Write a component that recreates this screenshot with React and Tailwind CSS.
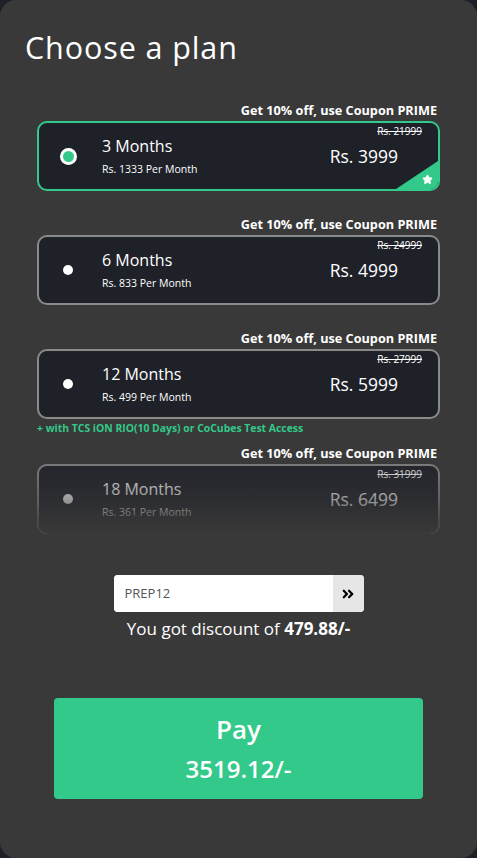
import { Star } from "lucide-react";
import { FaAngleDoubleRight } from "react-icons/fa";

const plans = [
  { id: 3, label: "3 Months", perMonth: "Rs. 1333 Per Month", mrp: "Rs. 21999", price: "Rs. 3999", selected: true },
  { id: 6, label: "6 Months", perMonth: "Rs. 833 Per Month", mrp: "Rs. 24999", price: "Rs. 4999" },
  {
    id: 12,
    label: "12 Months",
    perMonth: "Rs. 499 Per Month",
    mrp: "Rs. 27999",
    price: "Rs. 5999",
    extra: "+ with TCS iON RIO(10 Days) or CoCubes Test Access",
  },
  { id: 18, label: "18 Months", perMonth: "Rs. 361 Per Month", mrp: "Rs. 31999", price: "Rs. 6499", faded: true },
];

function PlanCard({ plan }) {
  return (
    <div className="flex flex-col">
      <p className="h-[17px] pr-[3px] text-right text-[12.7px] font-bold leading-[17px] text-white">
        Get 10% off, use Coupon PRIME
      </p>
      <div className="relative mt-[2px]">
        <div
          className={
            "relative flex h-[70px] items-center overflow-hidden rounded-[10px] border-2 bg-[#1f2129] " +
            (plan.selected ? "border-[#32c98a]" : "border-[#8a8a8a]")
          }
        >
          <div className="flex w-[58px] justify-center">
            {plan.selected ? (
              <span className="flex h-[17px] w-[17px] items-center justify-center rounded-full bg-white">
                <span className="h-[11px] w-[11px] rounded-full bg-[#32c98a]" />
              </span>
            ) : (
              <span className="h-[10px] w-[10px] rounded-full bg-white" />
            )}
          </div>
          <div className="flex flex-1 flex-col pl-[5px]">
            <span className="text-[16px] font-medium leading-[20px] text-white">{plan.label}</span>
            <span className="mt-[6px] text-[10.5px] font-medium leading-[14px] text-white">{plan.perMonth}</span>
          </div>
          <div className="flex flex-col items-end self-start pr-[16px] pt-[2px]">
            <span className="text-[10px] leading-[12px] text-white line-through">{plan.mrp}</span>
            <span className="mr-[24px] mt-[8px] text-[17.5px] font-medium leading-[22px] text-white">{plan.price}</span>
          </div>
          {plan.selected ? (
            <div className="absolute bottom-0 right-0 h-[28px] w-[42px] bg-[#32c98a] [clip-path:polygon(100%_0,100%_100%,0_100%)]">
              <Star className="absolute bottom-[4px] right-[5px] h-[11px] w-[11px] fill-white text-white" />
            </div>
          ) : null}
        </div>
        {plan.faded ? (
          <div className="pointer-events-none absolute inset-0 rounded-[10px] bg-gradient-to-b from-[#393939]/20 via-[#393939]/50 to-[#393939]" />
        ) : null}
      </div>
      {plan.extra ? (
        <p className="mt-[3px] text-[10.4px] font-bold leading-[12px] text-[#32c98a]">{plan.extra}</p>
      ) : null}
    </div>
  );
}

export default function App() {
  return (
    <div className="h-[858px] w-[477px] bg-[#1e2029] font-['Open_Sans',sans-serif]">
      <div className="flex h-full flex-col rounded-[16px] bg-[#393939] px-[37px]">
        <h1 className="ml-[-12px] mt-[29px] text-[30.5px] font-normal leading-[36px] tracking-[0.9px] text-white">
          Choose a plan
        </h1>

        <div className="mt-[37px] flex flex-col">
          {plans.map((p, i) => (
            <div key={p.id} className={i === 0 ? "" : p.id === 18 ? "mt-[11px]" : "mt-[25px]"}>
              <PlanCard plan={p} />
            </div>
          ))}
        </div>

        <div className="mt-[41px] flex flex-col items-center">
          <div className="flex h-[37px] w-[250px] overflow-hidden rounded-[4px] bg-white">
            <input
              defaultValue="PREP12"
              className="min-w-0 flex-1 bg-white px-[11px] text-[13px] text-[#555] outline-none"
            />
            <button className="flex w-[31px] items-center justify-center bg-[#e6e6e6] text-black">
              <FaAngleDoubleRight className="h-[14px] w-[14px]" />
            </button>
          </div>
          <p className="mt-[6px] text-[17px] leading-[22px] text-white">
            You got discount of <span className="font-bold">479.88/-</span>
          </p>
        </div>

        <button className="mx-auto mt-[58px] flex h-[101px] w-[369px] flex-col items-center justify-center rounded-[4px] bg-[#32c98a] text-[24px] font-semibold leading-[39px] text-white">
          <span className="text-[26px]">Pay</span>
          <span>3519.12/-</span>
        </button>
      </div>
    </div>
  );
}
